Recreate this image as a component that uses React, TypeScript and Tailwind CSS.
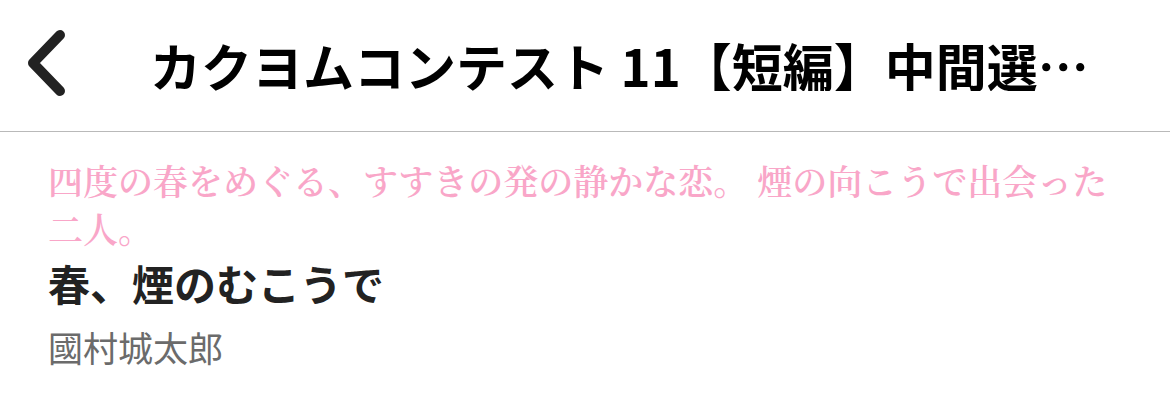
import React from "react";

const jpSans = '"Noto Sans CJK JP", "Noto Sans", sans-serif';
const jpSerif = '"Noto Serif CJK JP", "Noto Serif JP", "Noto Sans CJK JP", serif';

function BackChevron() {
  return (
    <svg width="80" height="120" viewBox="0 0 80 120" className="block">
      <polyline
        points="60,29 33,57 60,85"
        fill="none"
        stroke="#222222"
        strokeWidth="10"
        strokeLinecap="round"
        strokeLinejoin="round"
      />
    </svg>
  );
}

export default function App() {
  return (
    <div className="w-[1170px] h-[411px] bg-white overflow-hidden">
      <header className="h-[132px] border-b border-[#b9b9b9] flex items-center pr-[60px]">
        <div className="w-[150px] shrink-0 flex items-center">
          <BackChevron />
        </div>
        <h1
          className="flex-1 min-w-0 truncate text-[51px] font-bold leading-none text-black"
          style={{ fontFamily: jpSans }}
        >
          カクヨムコンテスト 11【短編】中間選考結果発表
        </h1>
      </header>

      <section className="px-[48px] pt-[24px]">
        <p
          className="text-[35px] leading-[48px] text-[#f9a6c8] font-semibold"
          style={{ fontFamily: jpSerif }}
        >
          四度の春をめぐる、すすきの発の静かな恋。 煙の向こうで出会った二人。
        </p>
        <h2
          className="mt-[3px] text-[42px] leading-[56px] font-bold text-[#222222]"
          style={{ fontFamily: jpSans }}
        >
          春、煙のむこうで
        </h2>
        <p
          className="mt-[14px] text-[35px] leading-[44px] text-[#6b6b6b]"
          style={{ fontFamily: jpSans }}
        >
          國村城太郎
        </p>
      </section>
    </div>
  );
}
